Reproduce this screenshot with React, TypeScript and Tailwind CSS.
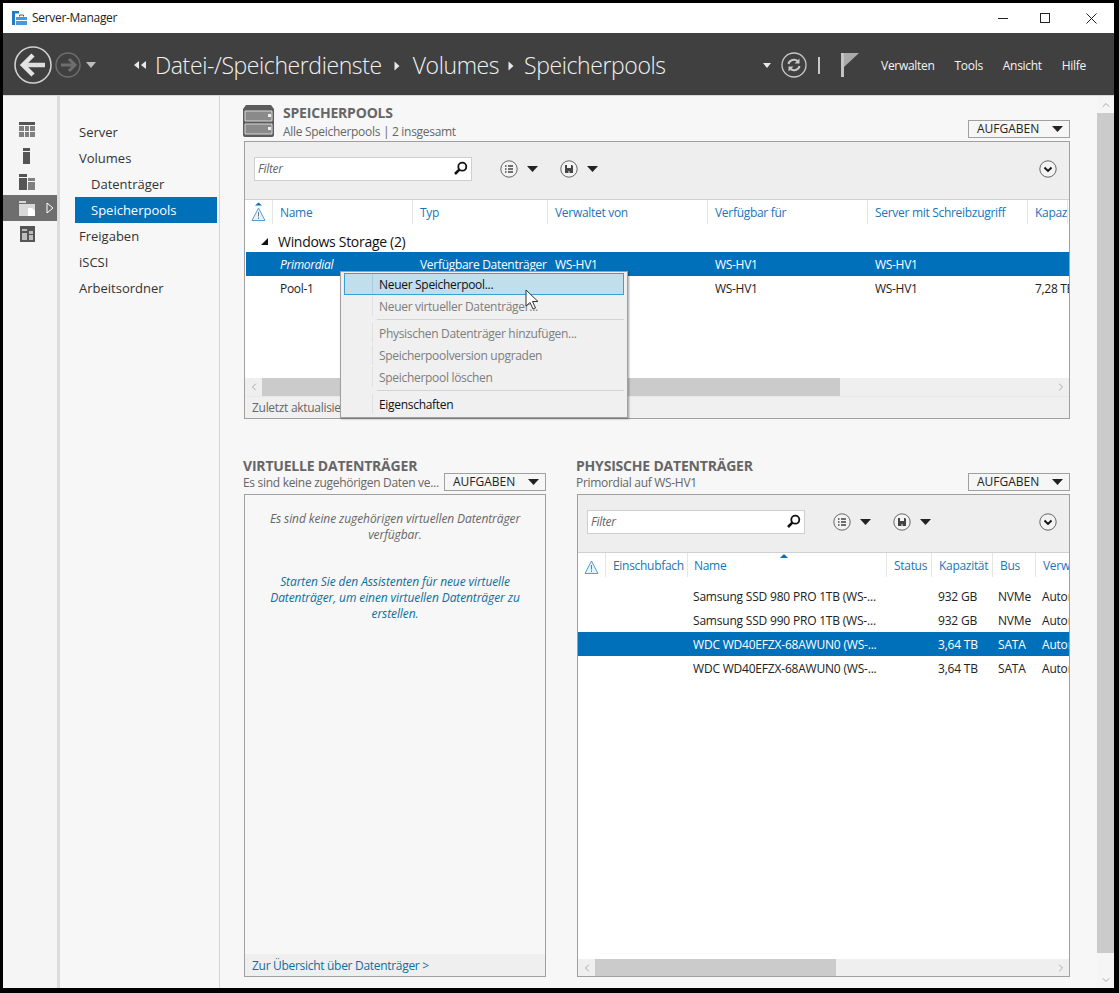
import { ChevronLeft, ChevronRight, ChevronUp, ChevronDown } from "lucide-react";

const font = "font-['Open_Sans','Noto_Sans',sans-serif]";

function Caret({ className = "" }: { className?: string }) {
  return (
    <svg width="11" height="6" viewBox="0 0 11 6" className={className}>
      <path d="M0 0 H11 L5.5 6 Z" fill="#222" />
    </svg>
  );
}

function Crumb({ className }: { className: string }) {
  return (
    <svg width="6" height="10" viewBox="0 0 6 10" className={className}>
      <path d="M0.5 0.5 L5.5 5 L0.5 9.5 Z" fill="#e8e8e8" />
    </svg>
  );
}

function Circle({ children, size = 18 }: { children?: React.ReactNode; size?: number }) {
  return (
    <svg width={size} height={size} viewBox="0 0 18 18">
      <circle cx="9" cy="9" r="8.2" fill="#f3f3f3" stroke="#666" strokeWidth="1" />
      {children}
    </svg>
  );
}

function ListButton() {
  return (
    <Circle>
      <path d="M5 6h1.5M8 6h5M5 9h1.5M8 9h5M5 12h1.5M8 12h5" stroke="#444" strokeWidth="1.6" />
    </Circle>
  );
}

function SaveButton() {
  return (
    <Circle>
      <path d="M5 5h7l1 1v7H5z" fill="#444" />
      <path d="M7 5h4v3H7z" fill="#f3f3f3" />
      <path d="M8 11h2v2H8z" fill="#999" />
    </Circle>
  );
}

function ExpandButton() {
  return (
    <Circle>
      <path d="M5.5 7.5 L9 11 L12.5 7.5" fill="none" stroke="#111" strokeWidth="1.8" />
    </Circle>
  );
}

function Lens() {
  return (
    <svg width="15" height="15" viewBox="0 0 15 15">
      <circle cx="9.3" cy="5.7" r="4" fill="none" stroke="#111" strokeWidth="1.8" />
      <path d="M6.3 8.7 L2 13" stroke="#111" strokeWidth="2.6" />
    </svg>
  );
}

function Warning({ sort }: { sort?: boolean }) {
  return (
    <svg width="15" height="20" viewBox="0 0 15 20">
      {sort && <path d="M4 3.5 L7.5 0.5 L11 3.5 Z" fill="#0070bb" />}
      <path d="M7.5 6 L14 18.5 H1 Z" fill="#e9f2fa" stroke="#5a9bd0" strokeWidth="1" />
      <path d="M7.5 10v4.5M7.5 15.5v1.5" stroke="#777" strokeWidth="1" />
    </svg>
  );
}

function AufgabenButton({ className = "" }: { className?: string }) {
  return (
    <div
      className={`flex h-[18px] w-[102px] shrink-0 items-center justify-between border border-[#a0a0a0] bg-[#f6f6f6] pl-2 pr-[6px] text-[12px] leading-none tracking-normal text-[#222] ${className}`}
    >
      <span>AUFGABEN</span>
      <Caret />
    </div>
  );
}

function Toolbar() {
  return (
    <div className="flex h-[58px] shrink-0 items-center border-b border-[#d0d0d0] bg-[#eeeeee] pb-[4px] pl-[9px] pr-[12px]">
      <div className="flex h-[24px] w-[218px] items-center justify-between border border-[#cfcfcf] bg-white px-[3px]">
        <span className="text-[12px] italic text-[#666]">Filter</span>
        <Lens />
      </div>
      <div className="ml-7 flex items-center gap-[22px]">
        <div className="flex items-center gap-[9px]">
          <ListButton />
          <Caret />
        </div>
        <div className="flex items-center gap-[9px]">
          <SaveButton />
          <Caret />
        </div>
      </div>
      <div className="ml-auto flex">
        <ExpandButton />
      </div>
    </div>
  );
}

function HScrollbar({ thumb, h = "h-[18px]" }: { thumb: string; h?: string }) {
  return (
    <div className={`flex shrink-0 items-center bg-[#efefef] ${h}`}>
      <div className="flex w-[17px] justify-center">
        <ChevronLeft size={12} color="#a8a8a8" />
      </div>
      <div className={`h-full bg-[#cbcbcb] ${thumb}`} />
      <div className="ml-auto flex w-[17px] justify-center">
        <ChevronRight size={12} color="#a8a8a8" />
      </div>
    </div>
  );
}

function HeaderCell({ label, width, className = "" }: { label: string; width: string; className?: string }) {
  return (
    <div className={`flex h-full shrink-0 items-center overflow-hidden whitespace-nowrap border-r border-[#e6e6e6] pl-[7px] pt-[2px] ${width} ${className}`}>
      {label}
    </div>
  );
}

const poolHeaders = [
  { label: "Name", width: "w-[140px]" },
  { label: "Typ", width: "w-[135px]" },
  { label: "Verwaltet von", width: "w-[160px]" },
  { label: "Verfügbar für", width: "w-[160px]" },
  { label: "Server mit Schreibzugriff", width: "w-[160px]" },
  { label: "Kapazi", width: "w-[40px]" },
];

const poolCols = ["w-[167px]", "w-[135px]", "w-[160px]", "w-[160px]", "w-[160px]", "w-[60px]"];

function PoolRow({ cells, selected, italic }: { cells: string[]; selected?: boolean; italic?: boolean }) {
  return (
    <div className={`ml-[1px] flex h-[24px] shrink-0 items-center overflow-hidden pt-[2px] text-[12px] ${selected ? "bg-[#0070bb] text-white" : "text-[#222]"}`}>
      {cells.map((c, i) => (
        <div key={i} className={`shrink-0 whitespace-nowrap ${i === 0 ? "pl-[34px]" : "pl-[7px]"} ${poolCols[i]} ${i === 0 && italic ? "italic" : ""}`}>
          {c}
        </div>
      ))}
    </div>
  );
}

const diskCols = ["w-[109px]", "w-[200px]", "w-[45px]", "w-[60px]", "w-[44px]", "w-[40px]"];

function DiskRow({ cells, selected }: { cells: string[]; selected?: boolean }) {
  return (
    <div className={`flex h-[24px] shrink-0 items-center overflow-hidden pt-[2px] text-[12px] tracking-[-0.2px] ${selected ? "bg-[#0070bb] text-white" : "text-[#222]"}`}>
      {cells.map((c, i) => (
        <div key={i} className={`shrink-0 overflow-hidden whitespace-nowrap ${i === 0 ? "" : "pl-[6px]"} ${diskCols[i]}`}>
          {c}
        </div>
      ))}
    </div>
  );
}

function NavIcon({ d, active }: { d: React.ReactNode; active?: boolean }) {
  return (
    <div className={`relative flex h-[26px] w-[54px] items-center pl-[16px] ${active ? "bg-[#6e6e6e]" : ""}`}>
      {d}
      {active && (
        <svg width="8" height="12" viewBox="0 0 8 12" className="absolute left-[43px] top-[7px]">
          <path d="M1 1 L7 6 L1 11 Z" fill="none" stroke="#fff" strokeWidth="1" />
        </svg>
      )}
    </div>
  );
}

function NavItem({ label, sub, active }: { label: string; sub?: boolean; active?: boolean }) {
  return (
    <div className={`flex h-[26px] items-center pt-[2px] text-[13px] tracking-normal ${sub ? "pl-[16px]" : "pl-[4px]"} ${active ? "bg-[#0070bb] text-white" : "text-[#333]"}`}>
      {label}
    </div>
  );
}

function MenuItem({ label, disabled, hot }: { label: string; disabled?: boolean; hot?: boolean }) {
  return (
    <div
      className={`flex h-[22px] items-center text-[12px] ${
        hot ? "border border-[#3ba0d8] bg-[#c1deec]" : "border border-transparent"
      } ${disabled ? "text-[#7d7d7d]" : "text-[#111]"}`}
    >
      <div className={`h-full w-[28px] shrink-0 border-r ${hot ? "border-[#a8ccdc]" : "border-[#e0e0e0]"}`} />
      <span className="pl-[6px] pt-[2px]">{label}</span>
    </div>
  );
}

function MenuSeparator() {
  return <div className="my-[2px] ml-[33px] h-px bg-[#d4d4d4]" />;
}

function PanelTitle({ children }: { children: React.ReactNode }) {
  return <span className="block text-[14px] font-bold leading-[18px] tracking-[-0.2px] text-[#666]">{children}</span>;
}

export default function App() {
  return (
    <div className={`flex h-[993px] w-[1119px] flex-col bg-black pb-[5px] pl-[3px] pr-[5px] pt-[3px] tracking-[-0.3px] ${font}`}>
      {/* title bar */}
      <div className="flex h-[30px] shrink-0 items-center bg-white pl-[9px]">
        <svg width="15" height="15" viewBox="0 0 15 15">
          <path d="M0 0h7v2.5H3V14H0z" fill="#1e7fc8" />
          <path d="M4 6h11v8H4z" fill="#4a9ad8" />
          <path d="M7.5 5.5v-1.5h4v1.5" fill="none" stroke="#555" />
          <path d="M4 9.5h11" stroke="#fff" />
        </svg>
        <span className="ml-[5px] text-[12px] text-[#222]">Server-Manager</span>
        <div className="ml-auto flex items-center">
          <div className="flex w-[38px] justify-center">
            <div className="h-px w-[10px] bg-[#222]" />
          </div>
          <div className="flex w-[46px] justify-center">
            <div className="h-[10px] w-[10px] border border-[#222]" />
          </div>
          <div className="flex w-[46px] justify-center">
            <svg width="11" height="11" viewBox="0 0 11 11">
              <path d="M0.5 0.5 L10.5 10.5 M10.5 0.5 L0.5 10.5" stroke="#222" strokeWidth="1" />
            </svg>
          </div>
        </div>
      </div>

      {/* dark header */}
      <div className="flex h-[63px] shrink-0 items-center border-b border-[#d8d8d8] bg-[#404040] pl-[11px] pt-[2px] text-white">
        <svg width="38" height="38" viewBox="0 0 38 38">
          <circle cx="19" cy="19" r="18" fill="none" stroke="#d0d0d0" strokeWidth="1.6" />
          <path d="M9 19 H31" stroke="#dedede" strokeWidth="4.5" />
          <path d="M19 9 L9 19 L19 29" fill="none" stroke="#e4e4e4" strokeWidth="4.5" />
        </svg>
        <svg width="26" height="26" viewBox="0 0 26 26" className="ml-[3px]">
          <circle cx="13" cy="13" r="12" fill="none" stroke="#6e6e6e" strokeWidth="1.4" />
          <path d="M6 13 H20" stroke="#6e6e6e" strokeWidth="3" />
          <path d="M14 7 L20 13 L14 19" fill="none" stroke="#6e6e6e" strokeWidth="3" />
        </svg>
        <svg width="10" height="6" viewBox="0 0 10 6" className="ml-[5px]">
          <path d="M0 0h10L5 6z" fill="#bdbdbd" />
        </svg>
        <svg width="13" height="8" viewBox="0 0 13 8" className="ml-[38px]">
          <path d="M5 0v8L0 4zM12 0v8L7 4z" fill="#e8e8e8" />
        </svg>
        <div className="ml-[8px] mt-[1px] flex items-center text-[23px] font-light tracking-[-0.4px] text-[#f2f2f2]">
          <span>Datei-/Speicherdienste</span>
          <Crumb className="ml-[12px] mr-[13px]" />
          <span>Volumes</span>
          <Crumb className="ml-[9px] mr-[10px]" />
          <span>Speicherpools</span>
        </div>
        <div className="ml-auto flex items-center">
          <svg width="8" height="5" viewBox="0 0 8 5">
            <path d="M0 0h8L4 5z" fill="#e8e8e8" />
          </svg>
          <svg width="26" height="26" viewBox="0 0 26 26" className="ml-[10px]">
            <circle cx="13" cy="13" r="12" fill="none" stroke="#c8c8c8" strokeWidth="1.3" />
            <path d="M7.5 12a5.5 5 0 0 1 9.5-2.5M18.5 14a5.5 5 0 0 1-9.5 2.5" fill="none" stroke="#c8c8c8" strokeWidth="2" />
            <path d="M18.5 6.5v5h-5zM7.5 19.5v-5h5z" fill="#c8c8c8" />
          </svg>
          <div className="ml-[11px] h-[17px] w-[2px] bg-[#c8c8c8]" />
          <svg width="18" height="24" viewBox="0 0 18 24" className="ml-[21px]">
            <path d="M0 0h3v24H0z" fill="#c4c4c4" />
            <path d="M3 0h15L3 14z" fill="#aaa" />
          </svg>
          <div className="ml-[22px] mt-[1px] flex gap-[20px] pr-[28px] text-[12px] text-[#f4f4f4]">
            <span>Verwalten</span>
            <span>Tools</span>
            <span>Ansicht</span>
            <span>Hilfe</span>
          </div>
        </div>
      </div>

      {/* body */}
      <div className="flex min-h-0 flex-1">
        {/* icon rail */}
        <div className="flex w-[57px] shrink-0 flex-col border-r-[3px] border-[#dcdcdc] bg-[#f5f5f5] pt-[21px]">
          <NavIcon d={
            <svg width="16" height="16" viewBox="0 0 16 16">
              <path d="M0 0h16v3H0z" fill="#555" />
              <path d="M0 4h5v5H0zM6 4h4v5H6zM11 4h5v5h-5zM0 10h5v5H0zM6 10h4v5H6zM11 10h5v5h-5z" fill="#808080" />
            </svg>
          } />
          <NavIcon d={
            <svg width="16" height="16" viewBox="0 0 16 16">
              <path d="M4 0h7v3H4z" fill="#555" />
              <path d="M4 4h7v12H4z" fill="#555" />
            </svg>
          } />
          <NavIcon d={
            <svg width="16" height="16" viewBox="0 0 16 16">
              <path d="M0 0h8v3H0zM0 4h8v12H0z" fill="#555" />
              <path d="M9 4h7v3H9zM9 8h7v8H9z" fill="#808080" />
            </svg>
          } />
          <NavIcon active d={
            <svg width="16" height="16" viewBox="0 0 16 16">
              <path d="M0 1h7v2H0zM0 4h16v12H0z" fill="#d8d8d8" />
              <path d="M9 8h4l3 3v5H9z" fill="#fff" />
            </svg>
          } />
          <NavIcon d={
            <svg width="16" height="16" viewBox="0 0 16 16">
              <path d="M1 0h15v16H1z" fill="#555" />
              <path d="M3 3h5v2H3zM3 7h5v7H3zM10 5h4v3h-4zM10 9h4v5h-4z" fill="#bdbdbd" />
            </svg>
          } />
        </div>

        {/* second nav */}
        <div className="flex w-[160px] shrink-0 flex-col border-r border-[#d4d4d4] bg-[#f7f7f7] pl-[15px] pr-[2px] pt-[23px]">
          <NavItem label="Server" />
          <NavItem label="Volumes" />
          <NavItem label="Datenträger" sub />
          <NavItem label="Speicherpools" sub active />
          <NavItem label="Freigaben" />
          <NavItem label="iSCSI" />
          <NavItem label="Arbeitsordner" />
        </div>

        {/* content */}
        <div className="flex min-w-0 flex-1 flex-col bg-[#f7f7f7] pl-[23px] pr-[27px] pt-[8px]">
          <div className="flex h-[37px] shrink-0 items-start">
            <svg width="33" height="33" viewBox="1 0 33 33" className="shrink-0">
              <path d="M4 1h25l3 4v26a2 2 0 0 1-2 2H3a2 2 0 0 1-2-2V5z" fill="#5c5c5c" />
              <path d="M3 7h27v10H3zM3 20h27v10H3z" fill="#8a8a8a" stroke="#d8d8d8" strokeWidth="1" />
              <path d="M26 10h3v3h-3zM26 23h3v3h-3z" fill="#eee" />
            </svg>
            <div className="ml-[7px] flex min-w-0 flex-1 flex-col">
              <PanelTitle>SPEICHERPOOLS</PanelTitle>
              <span className="text-[12px] leading-[19px] text-[#666]">Alle Speicherpools | 2 insgesamt</span>
            </div>
            <AufgabenButton className="mt-[16px]" />
          </div>

          {/* pools box */}
          <div className="relative ml-[1px] flex h-[278px] shrink-0 flex-col border border-[#a0a0a0] bg-white">
            <Toolbar />
            <div className="flex h-[24px] shrink-0 items-center overflow-hidden text-[12px] text-[#1a75bb]">
              <div className="flex h-full w-[28px] shrink-0 items-center justify-center border-r border-[#e6e6e6]">
                <Warning sort />
              </div>
              {poolHeaders.map((h) => (
                <HeaderCell key={h.label} label={h.label} width={h.width} />
              ))}
            </div>
            <div className="flex h-[28px] shrink-0 items-end pb-[1px] pl-[15px] text-[14px] text-[#111]">
              <svg width="9" height="9" viewBox="0 0 9 9" className="mb-[5px]">
                <path d="M8 1v7H1z" fill="#111" />
              </svg>
              <span className="ml-[9px] translate-y-[1px]">Windows Storage (2)</span>
            </div>
            <PoolRow selected italic cells={["Primordial", "Verfügbare Datenträger", "WS-HV1", "WS-HV1", "WS-HV1", ""]} />
            <PoolRow cells={["Pool-1", "", "", "WS-HV1", "WS-HV1", "7,28 TB"]} />
            <div className="mt-auto">
              <HScrollbar thumb="w-[578px]" />
              <div className="flex h-[22px] items-center border-t border-[#e8e8e8] bg-[#f0f0f0] pl-[7px] text-[12px] text-[#666]">
                Zuletzt aktualisiert
              </div>
            </div>

            {/* context menu */}
            <div className="absolute left-[95px] top-[129px] flex w-[288px] flex-col border border-[#a0a0a0] bg-[#f0f0f0] px-[3px] pb-[2px] pt-[1px] shadow-[1px_1px_2px_rgba(0,0,0,0.35)]">
              <MenuItem hot label="Neuer Speicherpool..." />
              <MenuItem disabled label="Neuer virtueller Datenträger..." />
              <MenuSeparator />
              <MenuItem disabled label="Physischen Datenträger hinzufügen..." />
              <MenuItem disabled label="Speicherpoolversion upgraden" />
              <MenuItem disabled label="Speicherpool löschen" />
              <MenuSeparator />
              <MenuItem label="Eigenschaften" />
            </div>
            <svg width="14" height="21" viewBox="0 0 14 21" className="absolute left-[280px] top-[147px]">
              <path d="M1 1 V17 L5 13.5 L8 20 L10.5 19 L7.5 12.5 H13 Z" fill="#fff" stroke="#333" strokeWidth="1" />
            </svg>
          </div>

          {/* lower panels */}
          <div className="mt-[38px] flex min-h-0 flex-1 gap-[30px] pb-[11px]">
            <div className="flex w-[303px] shrink-0 flex-col">
              <div className="flex h-[37px] shrink-0 flex-col">
                <div className="h-[16px]">
                  <PanelTitle>VIRTUELLE DATENTRÄGER</PanelTitle>
                </div>
                <div className="flex h-[18px] items-center justify-between">
                  <span className="whitespace-nowrap pt-[1px] text-[12px] text-[#666]">Es sind keine zugehörigen Daten ve...</span>
                  <AufgabenButton />
                </div>
              </div>
              <div className="ml-[1px] flex min-h-0 flex-1 flex-col border border-[#a0a0a0] bg-[#f7f7f7]">
                <div className="flex flex-1 flex-col px-[22px] pt-[16px] text-center text-[12px] italic leading-[16px] tracking-[-0.1px]">
                  <p className="text-[#666]">Es sind keine zugehörigen virtuellen Datenträger verfügbar.</p>
                  <p className="mt-[31px] text-[#0a6f9c]">
                    Starten Sie den Assistenten für neue virtuelle Datenträger, um einen virtuellen Datenträger zu erstellen.
                  </p>
                </div>
                <div className="flex h-[22px] shrink-0 items-center bg-[#efefef] pl-[7px] pt-[2px] text-[12px] text-[#0a6f9c]">
                  Zur Übersicht über Datenträger &gt;
                </div>
              </div>
            </div>

            <div className="flex min-w-0 flex-1 flex-col">
              <div className="flex h-[37px] shrink-0 flex-col">
                <div className="h-[16px]">
                  <PanelTitle>PHYSISCHE DATENTRÄGER</PanelTitle>
                </div>
                <div className="flex h-[18px] items-center justify-between">
                  <span className="pt-[1px] text-[12px] text-[#666]">Primordial auf WS-HV1</span>
                  <AufgabenButton />
                </div>
              </div>
              <div className="ml-[1px] flex min-h-0 flex-1 flex-col border border-[#a0a0a0] bg-white">
                <Toolbar />
                <div className="flex h-[24px] shrink-0 items-center overflow-hidden text-[12px] text-[#1a75bb]">
                  <div className="flex h-full w-[28px] shrink-0 items-center justify-center border-r border-[#e6e6e6]">
                    <Warning />
                  </div>
                  <HeaderCell label="Einschubfach" width="w-[82px]" />
                  <div className="relative flex h-full w-[199px] shrink-0 items-center border-r border-[#e6e6e6] pl-[6px] pt-[2px]">
                    Name
                    <svg width="8" height="4" viewBox="0 0 8 4" className="absolute left-[92px] top-[1px]">
                      <path d="M4 0L8 4H0z" fill="#0070bb" />
                    </svg>
                  </div>
                  <HeaderCell label="Status" width="w-[45px]" className="pl-[6px]" />
                  <HeaderCell label="Kapazität" width="w-[61px]" className="pl-[6px]" />
                  <HeaderCell label="Bus" width="w-[43px]" className="pl-[6px]" />
                  <HeaderCell label="Verw" width="w-[40px]" className="border-r-0 pl-[6px]" />
                </div>
                <div className="h-[7px] shrink-0" />
                <DiskRow cells={["", "Samsung SSD 980 PRO 1TB (WS-...", "", "932 GB", "NVMe", "Autom"]} />
                <DiskRow cells={["", "Samsung SSD 990 PRO 1TB (WS-...", "", "932 GB", "NVMe", "Autom"]} />
                <DiskRow selected cells={["", "WDC WD40EFZX-68AWUN0 (WS-...", "", "3,64 TB", "SATA", "Autom"]} />
                <DiskRow cells={["", "WDC WD40EFZX-68AWUN0 (WS-...", "", "3,64 TB", "SATA", "Autom"]} />
                <div className="mt-auto">
                  <HScrollbar thumb="w-[241px]" h="h-[17px]" />
                </div>
              </div>
            </div>
          </div>
        </div>

        {/* vertical scrollbar */}
        <div className="flex w-[17px] shrink-0 flex-col items-center bg-[#f5f5f5]">
          <div className="flex h-[17px] items-center justify-center">
            <ChevronUp size={12} color="#a8a8a8" />
          </div>
          <div className="h-[840px] w-full bg-[#cbcbcb]" />
          <div className="mt-auto flex h-[17px] items-center justify-center">
            <ChevronDown size={12} color="#a8a8a8" />
          </div>
        </div>
      </div>
    </div>
  );
}
